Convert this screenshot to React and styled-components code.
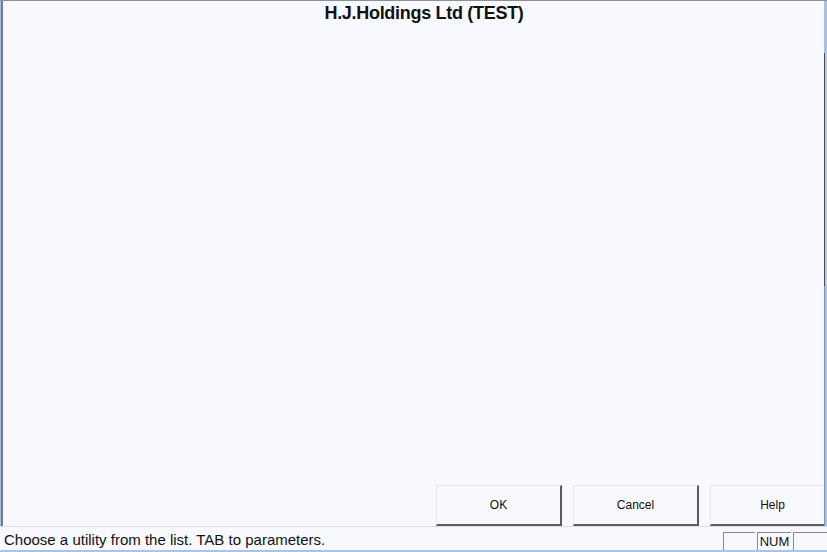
import styled, { createGlobalStyle } from 'styled-components';

const GlobalStyle = createGlobalStyle`
  html, body {
    margin: 0;
    padding: 0;
    background: #f7f9fe;
    font-family: "Liberation Sans", Arial, sans-serif;
  }
`;

export default function App() {
  return (
    <Screen>
      <GlobalStyle />
      <MainRow>
        <LeftEdge />
        <Panel>
          <Title>H.J.Holdings Ltd (TEST)</Title>
          <ButtonRow>
            <DialogButton>OK</DialogButton>
            <DialogButton>Cancel</DialogButton>
            <DialogButton>Help</DialogButton>
          </ButtonRow>
        </Panel>
        <RightEdge>
          <EdgeGap />
          <EdgeDark />
          <EdgeRest />
        </RightEdge>
      </MainRow>
      <StatusBar>
        <StatusText>Choose a utility from the list. TAB to parameters.</StatusText>
        <Panes>
          <Pane width={32}></Pane>
          <Pane width={34}>NUM</Pane>
          <Pane width={34}></Pane>
        </Panes>
      </StatusBar>
    </Screen>
  );
}

const Screen = styled.div`
  width: 827px;
  height: 552px;
  display: flex;
  flex-direction: column;
  overflow: hidden;
`;

const MainRow = styled.div`
  flex: 1;
  display: flex;
  min-height: 0;
  border-top: 1px solid #8c8f96;
`;

const LeftEdge = styled.div`
  width: 1px;
  background: #a9bfe2;
`;

const Panel = styled.div`
  flex: 1;
  display: flex;
  flex-direction: column;
  overflow: hidden;
  border-left: 2px solid #6f7c98;
`;

const Title = styled.div`
  text-align: center;
  font-weight: bold;
  font-size: 18px;
  letter-spacing: -0.3px;
  color: #111;
  padding-top: 2px;
  padding-left: 21px;
`;

const ButtonRow = styled.div`
  margin-top: auto;
  margin-right: -12px;
  display: flex;
  justify-content: flex-end;
  gap: 11px;
`;

const DialogButton = styled.button`
  width: 126px;
  height: 41px;
  background: #f7f9fe;
  border: none;
  border-left: 1px solid #e6e8ee;
  border-top: 1px solid #e6e8ee;
  border-right: 2px solid #5c5c5c;
  border-bottom: 2px solid #5c5c5c;
  font-family: "Liberation Sans", Arial, sans-serif;
  font-size: 12px;
  color: #111;
  padding: 0 0 1px 0;
`;

const RightEdge = styled.div`
  width: 3px;
  display: flex;
  flex-direction: column;
  background: #a9bfe2;
`;

const EdgeGap = styled.div`
  height: 52px;
`;

const EdgeDark = styled.div`
  height: 233px;
  border-left: 1px solid #4a4a4a;
  background: #b9c9e6;
`;

const EdgeRest = styled.div`
  flex: 1;
  border-left: 1px solid #7f95bd;
`;

const StatusBar = styled.div`
  height: 23px;
  display: flex;
  align-items: flex-end;
  border-top: 1px solid #d9dee9;
  border-bottom: 2px solid #a9c4ea;
  background: #f7f9fe;
`;

const StatusText = styled.div`
  flex: 1;
  font-size: 15px;
  color: #111;
  padding-left: 4px;
  padding-bottom: 2px;
`;

const Panes = styled.div`
  display: flex;
  gap: 2px;
`;

const Pane = styled.div`
  width: ${p => p.width}px;
  height: 18px;
  box-sizing: border-box;
  border-left: 1px solid #8a8a8a;
  border-top: 1px solid #8a8a8a;
  font-size: 13px;
  color: #111;
  display: flex;
  align-items: center;
  justify-content: center;
`;
